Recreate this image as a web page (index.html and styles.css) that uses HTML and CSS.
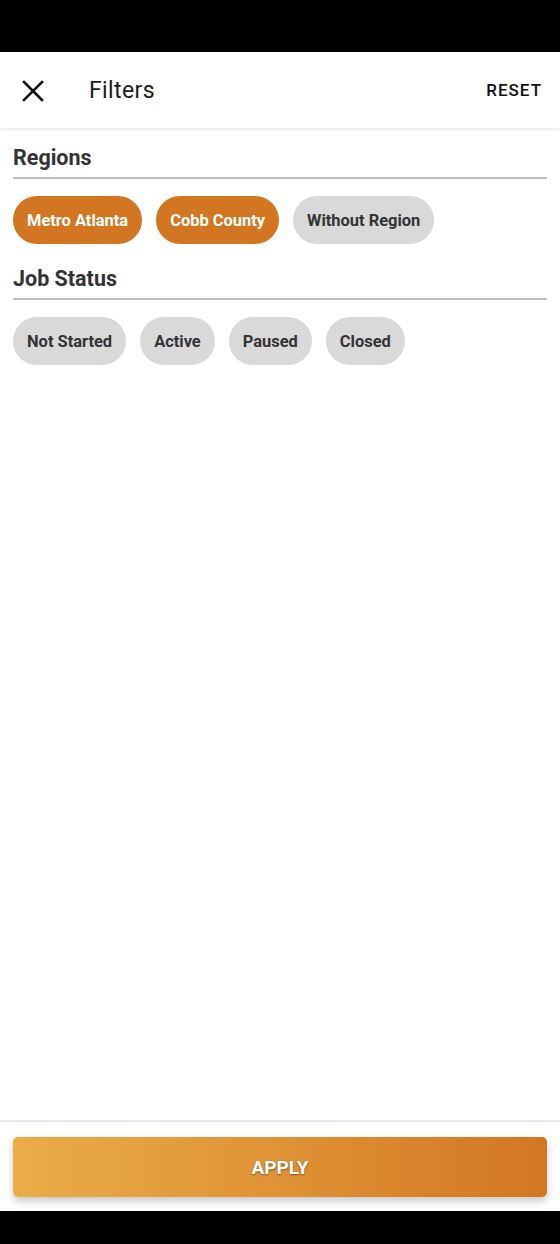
FILE: index.html
```html
<!DOCTYPE html>
<html lang="en">
<head>
<meta charset="utf-8">
<title>Filters</title>
<link rel="stylesheet" href="styles.css">
</head>
<body>
<div class="screen">
  <div class="statusbar"></div>
  <header class="appbar">
    <button class="icon-btn" aria-label="Close">
      <svg width="22" height="22" viewBox="0 0 22 22"><path d="M2 2 L20 20 M20 2 L2 20" stroke="#111" stroke-width="2.6" stroke-linecap="square" fill="none"/></svg>
    </button>
    <h1 class="title">Filters</h1>
    <button class="reset">RESET</button>
  </header>
  <main class="content">
    <section class="section">
      <h2 class="section-title">Regions</h2>
      <div class="chips">
        <span class="chip chip-on">Metro Atlanta</span>
        <span class="chip chip-on">Cobb County</span>
        <span class="chip">Without Region</span>
      </div>
    </section>
    <section class="section">
      <h2 class="section-title">Job Status</h2>
      <div class="chips">
        <span class="chip">Not Started</span>
        <span class="chip">Active</span>
        <span class="chip">Paused</span>
        <span class="chip">Closed</span>
      </div>
    </section>
  </main>
  <footer class="footer">
    <button class="apply">APPLY</button>
  </footer>
  <div class="navbar"></div>
</div>
</body>
</html>
```
FILE: styles.css
```css
* { box-sizing: border-box; }
html, body { margin: 0; padding: 0; background: #fff; }
body { font-family: Roboto, "Noto Sans", Arial, sans-serif; }
.screen { width: 560px; height: 1244px; display: flex; flex-direction: column; overflow: hidden; }
.statusbar { height: 52px; background: #000; flex: none; }
.appbar {
  height: 76px; flex: none; display: flex; align-items: center;
  padding: 0 18px 0 22px; background: #fff;
  box-shadow: 0 1px 4px rgba(0,0,0,0.12);
  position: relative; z-index: 1;
}
.icon-btn { border: 0; background: none; padding: 0; width: 22px; height: 22px; display: flex; margin-top: 1px; }
.title { margin: 2px 0 0 45px; font-size: 23px; font-weight: 400; color: #1c1c1c; flex: 1; line-height: 26px; letter-spacing: 0.4px; }
.reset { border: 0; background: none; padding: 0; font-family: inherit; font-size: 17px; font-weight: 500; color: #111; letter-spacing: 1px; margin-right: 0; }
.content { flex: 1; padding: 0 13px; }
.section { padding-top: 18px; }
.section + .section { padding-top: 23px; }
.section-title {
  margin: 0; font-size: 21.5px; font-weight: 700; color: #333; line-height: 24px;
  padding-bottom: 7px; border-bottom: 2px solid #bdbdbd;
}
.chips { display: flex; gap: 14px; margin-top: 17px; }
.chip {
  height: 48px; padding: 0 14px; border-radius: 24px; display: flex; align-items: center;
  background: #d9d9d9; color: #333; font-size: 16.45px; font-weight: 700;
}
.chip-on { background: #d27622; color: #fff; }
.footer { flex: none; border-top: 2px solid #e6e6e6; padding: 15px 13px 14px; }
.apply {
  width: 100%; height: 60px; border: 0; border-radius: 5px;
  background: linear-gradient(90deg, #eaad48 0%, #df9236 50%, #d27622 100%);
  color: #fff; font-family: inherit; font-size: 19px; font-weight: 700;
  text-shadow: 0 1px 2px rgba(0,0,0,0.45);
  box-shadow: 0 4px 8px rgba(0,0,0,0.22);
}
.navbar { height: 33px; background: #000; flex: none; }
```
